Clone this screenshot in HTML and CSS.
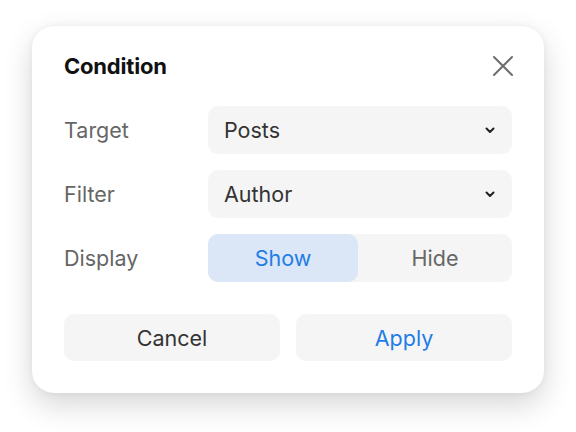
FILE: index.html
```html
<!DOCTYPE html>
<html>
<head>
<meta charset="utf-8">
<link rel="stylesheet" href="styles.css">
</head>
<body>
<div class="dialog">
  <div class="header">
    <h1 class="title">Condition</h1>
    <button class="close" aria-label="Close">
      <svg width="22" height="22" viewBox="0 0 22 22"><path d="M2 2 L20 20 M20 2 L2 20" stroke="#6e6e6e" stroke-width="2" fill="none" stroke-linecap="round"/></svg>
    </button>
  </div>
  <div class="form">
    <div class="row">
      <span class="label">Target</span>
      <div class="select"><span>Posts</span>
        <svg width="10" height="7" viewBox="0 0 10 7"><path d="M1.5 1.5 L5 5 L8.5 1.5" stroke="#222" stroke-width="2" fill="none" stroke-linecap="round" stroke-linejoin="round"/></svg>
      </div>
    </div>
    <div class="row">
      <span class="label">Filter</span>
      <div class="select"><span>Author</span>
        <svg width="10" height="7" viewBox="0 0 10 7"><path d="M1.5 1.5 L5 5 L8.5 1.5" stroke="#222" stroke-width="2" fill="none" stroke-linecap="round" stroke-linejoin="round"/></svg>
      </div>
    </div>
    <div class="row">
      <span class="label">Display</span>
      <div class="segmented">
        <div class="seg active">Show</div>
        <div class="seg">Hide</div>
      </div>
    </div>
  </div>
  <div class="actions">
    <button class="btn cancel">Cancel</button>
    <button class="btn apply">Apply</button>
  </div>
</div>
</body>
</html>
```
FILE: styles.css
```css
* { box-sizing: border-box; }
html, body { margin: 0; padding: 0; background: #fff; }
body {
  font-family: Inter, "Liberation Sans", sans-serif;
  width: 576px; height: 432px;
  padding: 26px 32px 0 32px;
}
.dialog {
  width: 512px;
  height: 367px;
  background: #fff;
  border-radius: 22px;
  box-shadow: 0 12px 30px rgba(0,0,0,0.16), 0 0 8px rgba(0,0,0,0.05);
  padding: 28px 32px 32px 32px;
  display: flex;
  flex-direction: column;
}
.header {
  display: flex;
  align-items: center;
  justify-content: space-between;
  height: 24px;
}
.title {
  margin: 0;
  font-size: 22px;
  font-weight: 700;
  color: #111;
  letter-spacing: -0.2px;
}
.close {
  border: 0; background: none; padding: 0; margin-right: -2px;
  width: 22px; height: 22px; display: flex;
}
.form {
  margin-top: 28px;
  display: flex;
  flex-direction: column;
  gap: 16px;
}
.row {
  display: flex;
  align-items: center;
  height: 48px;
}
.label {
  width: 144px;
  font-size: 21.5px;
  color: #666;
}
.select {
  flex: 1;
  height: 48px;
  background: #f5f5f5;
  border-radius: 10px;
  display: flex;
  align-items: center;
  justify-content: space-between;
  padding: 0 17px 0 16px;
  font-size: 21.5px;
  color: #333;
}
.segmented {
  flex: 1;
  height: 48px;
  background: #f5f5f5;
  border-radius: 10px;
  display: grid;
  grid-template-columns: 150px 1fr;
}
.seg {
  display: flex;
  align-items: center;
  justify-content: center;
  font-size: 21.5px;
  color: #666;
  border-radius: 10px;
}
.seg.active {
  background: #dbe6f6;
  color: #1f7de6;
}
.actions {
  margin-top: 32px;
  display: grid;
  grid-template-columns: 1fr 1fr;
  gap: 16px;
}
.btn {
  height: 47px;
  border: 0;
  border-radius: 10px;
  background: #f5f5f5;
  font-family: inherit;
  font-size: 21.5px;
}
.cancel { color: #333; }
.apply { color: #1f7de6; }
```
